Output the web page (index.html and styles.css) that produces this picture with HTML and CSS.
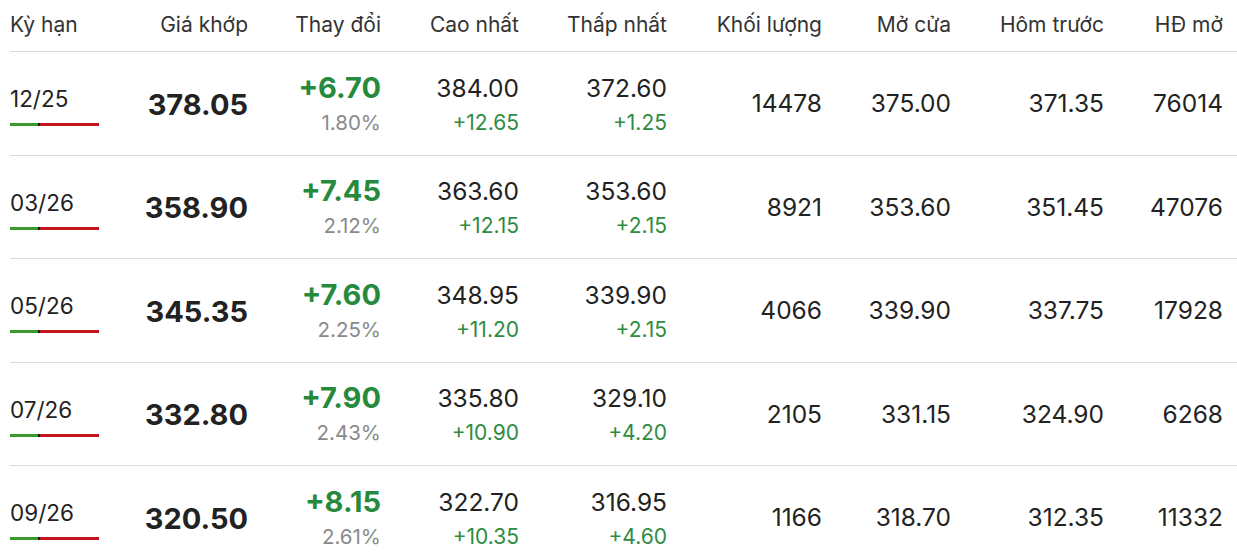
FILE: index.html
```html
<!DOCTYPE html>
<html lang="vi">
<head>
<meta charset="utf-8">
<title>Kỳ hạn</title>
<link rel="stylesheet" href="styles.css">
</head>
<body>
<div class="table">
  <div class="row head">
    <div class="c first">Kỳ hạn</div>
    <div class="c">Giá khớp</div>
    <div class="c">Thay đổi</div>
    <div class="c">Cao nhất</div>
    <div class="c">Thấp nhất</div>
    <div class="c">Khối lượng</div>
    <div class="c">Mở cửa</div>
    <div class="c">Hôm trước</div>
    <div class="c">HĐ mở</div>
  </div>

  <div class="row">
    <div class="c first"><div class="term">12/25</div><div class="bar"><span class="g"></span><span class="k"></span><span class="r"></span></div></div>
    <div class="c price">378.05</div>
    <div class="c two"><div class="chg">+6.70</div><div class="pct">1.80%</div></div>
    <div class="c two"><div class="val">384.00</div><div class="sub">+12.65</div></div>
    <div class="c two"><div class="val">372.60</div><div class="sub">+1.25</div></div>
    <div class="c num">14478</div>
    <div class="c num">375.00</div>
    <div class="c num">371.35</div>
    <div class="c num">76014</div>
  </div>

  <div class="row">
    <div class="c first"><div class="term">03/26</div><div class="bar"><span class="g"></span><span class="k"></span><span class="r"></span></div></div>
    <div class="c price">358.90</div>
    <div class="c two"><div class="chg">+7.45</div><div class="pct">2.12%</div></div>
    <div class="c two"><div class="val">363.60</div><div class="sub">+12.15</div></div>
    <div class="c two"><div class="val">353.60</div><div class="sub">+2.15</div></div>
    <div class="c num">8921</div>
    <div class="c num">353.60</div>
    <div class="c num">351.45</div>
    <div class="c num">47076</div>
  </div>

  <div class="row">
    <div class="c first"><div class="term">05/26</div><div class="bar"><span class="g"></span><span class="k"></span><span class="r"></span></div></div>
    <div class="c price">345.35</div>
    <div class="c two"><div class="chg">+7.60</div><div class="pct">2.25%</div></div>
    <div class="c two"><div class="val">348.95</div><div class="sub">+11.20</div></div>
    <div class="c two"><div class="val">339.90</div><div class="sub">+2.15</div></div>
    <div class="c num">4066</div>
    <div class="c num">339.90</div>
    <div class="c num">337.75</div>
    <div class="c num">17928</div>
  </div>

  <div class="row">
    <div class="c first"><div class="term">07/26</div><div class="bar"><span class="g"></span><span class="k"></span><span class="r"></span></div></div>
    <div class="c price">332.80</div>
    <div class="c two"><div class="chg">+7.90</div><div class="pct">2.43%</div></div>
    <div class="c two"><div class="val">335.80</div><div class="sub">+10.90</div></div>
    <div class="c two"><div class="val">329.10</div><div class="sub">+4.20</div></div>
    <div class="c num">2105</div>
    <div class="c num">331.15</div>
    <div class="c num">324.90</div>
    <div class="c num">6268</div>
  </div>

  <div class="row">
    <div class="c first"><div class="term">09/26</div><div class="bar"><span class="g"></span><span class="k"></span><span class="r"></span></div></div>
    <div class="c price">320.50</div>
    <div class="c two"><div class="chg">+8.15</div><div class="pct">2.61%</div></div>
    <div class="c two"><div class="val">322.70</div><div class="sub">+10.35</div></div>
    <div class="c two"><div class="val">316.95</div><div class="sub">+4.60</div></div>
    <div class="c num">1166</div>
    <div class="c num">318.70</div>
    <div class="c num">312.35</div>
    <div class="c num">11332</div>
  </div>
</div>
</body>
</html>
```

FILE: styles.css
```css
html, body {
  margin: 0;
  padding: 0;
  background: #ffffff;
}
body {
  font-family: Inter, "Noto Sans", "DejaVu Sans", sans-serif;
  color: #222222;
  overflow: hidden;
  height: 558px;
}
.table {
  margin-left: 10px;
}
.row {
  display: grid;
  grid-template-columns: 100px 138px 133px 138px 148px 155px 129px 153px 119px;
  padding-right: 14px;
  height: 102.5px;
  border-bottom: 1px solid #dcdcdc;
  align-items: center;
}
.row.head {
  height: 51px;
  font-size: 21px;
  color: #333333;
}
.c {
  text-align: right;
  white-space: nowrap;
}
.c.first {
  text-align: left;
  padding-top: 4px;
}
.row.head .c {
  padding-top: 0;
  padding-bottom: 3px;
}
.term {
  font-size: 22.5px;
  line-height: 30px;
  color: #222;
}
.bar {
  display: flex;
  width: 89px;
  height: 3px;
  margin-top: 9px;
}
.bar .g { width: 28px; background: #3c9a2c; }
.bar .k { width: 2px; background: #1a1a1a; }
.bar .r { flex: 1; background: #c4161c; }
.price {
  font-size: 29px;
  font-weight: 700;
  color: #222;
  padding-top: 2px;
}
.two {
  padding-top: 5px;
}
.chg {
  font-size: 29px;
  font-weight: 700;
  color: #268a3c;
  line-height: 34px;
}
.pct {
  font-size: 20.5px;
  color: #8a8a8a;
  line-height: 36px;
}
.val {
  font-size: 24.5px;
  line-height: 34px;
  color: #222;
}
.sub {
  font-size: 21px;
  line-height: 36px;
  color: #2e8b3f;
}
.num {
  font-size: 24.5px;
  color: #222;
}
```
